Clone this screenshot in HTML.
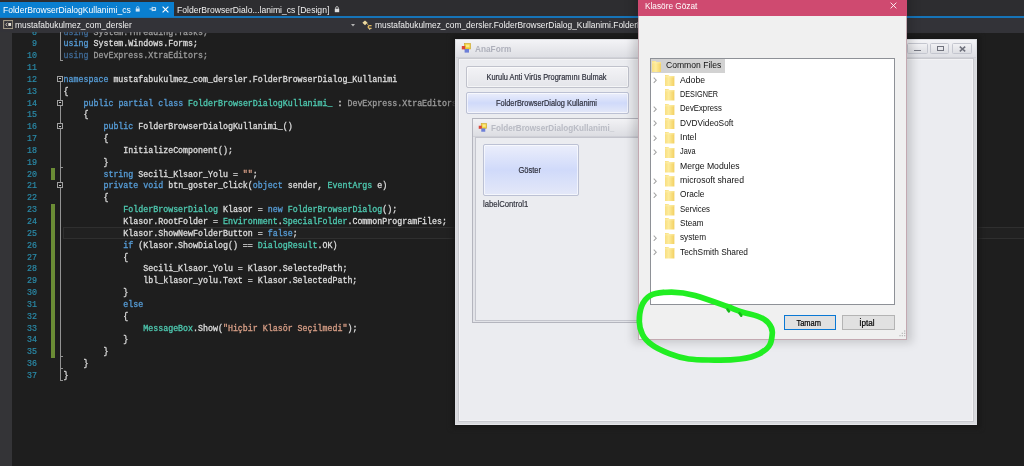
<!DOCTYPE html>
<html lang="tr">
<head>
<meta charset="utf-8">
<title>FolderBrowserDialog Kullanimi</title>
<style>
*{margin:0;padding:0;box-sizing:border-box}
html,body{width:1024px;height:466px;overflow:hidden;background:#1e1e1e}
body{position:relative;font-family:"Liberation Sans",sans-serif;filter:blur(.35px)}
.abs{position:absolute}
.ui{font-family:"Liberation Sans",sans-serif;white-space:nowrap;position:absolute}
/* ---------- IDE chrome ---------- */
#tabbar{left:0;top:0;width:1024px;height:16px;background:#2d2d30}
#tabline{left:0;top:16px;width:1024px;height:2.3px;background:#1674b8}
#tab1{left:0;top:2px;width:174px;height:15px;background:#0a7fd0}
#nav{left:0;top:18px;width:1024px;height:14.6px;background:#333338}
#margin{left:0;top:32px;width:12px;height:434px;background:#343437}
.tabtxt{top:3px;height:14px;line-height:14px;font-size:9px;color:#fff}
.navtxt{top:18.3px;height:14px;line-height:14px;font-size:9px;color:#f1f1f1}
/* ---------- code ---------- */
#code{left:0;top:32px;width:1024px;height:434px;overflow:hidden}
.ln,.cl{position:absolute;height:12px;line-height:12px;white-space:pre;font-family:"Liberation Mono",monospace;font-size:8.3px}
.ln{left:17px;width:20px;text-align:right;color:#2a8aa8}
.cl{left:63.6px;color:#dcdcdc;-webkit-text-stroke:.3px}
.ln{-webkit-text-stroke:.2px}
.k{color:#569cd6}.t{color:#4ec9b0}.s{color:#d69d85}.d{color:#9b9b9b}.dk{color:#3f6a95}
.gb{position:absolute;left:51px;width:4px;background:#6b8c35}
.vl{position:absolute;left:59.6px;width:1.3px;background:#939393}
.tk{position:absolute;left:60px;width:3px;height:1.2px;background:#939393}
.bx{position:absolute;left:56.6px;width:6px;height:6px;border:1px solid #a0a0a0;background:#1e1e1e}
.bx:after{content:"";position:absolute;left:1px;top:1.5px;width:2px;height:1px;background:#c8c8c8}
#curline{left:62.5px;top:194.7px;width:962px;height:12.4px;border:1px solid #2f2f2f;background:#212121}

/* ---------- AnaForm (DevExpress XtraForm) ---------- */
#shadowA{left:452px;top:36px;width:528px;height:392px;background:#171717;filter:blur(2.5px)}
#ana{left:455px;top:39px;width:521.5px;height:385.6px;background:#d9dade}
#anab{left:0;top:0;width:521.5px;height:385.6px;border:1px solid #dcdde1;border-bottom-color:#e6e6ea}
#anatitle{left:0;top:0;width:100%;height:18.5px;background:linear-gradient(#f4f4f7,#dedfe4);border-bottom:1px solid #d0d1d8}
#anaclient{left:2.6px;top:19px;width:516px;height:363.6px;background:#ebecf0;border:1px solid #c9cacf;box-shadow:inset 0 0 0 1px #f3f3f6}
.ftitle{font-weight:bold;color:#aeb0bb;font-size:8.6px;height:18px;line-height:18px;filter:blur(.5px)}
.dxbtn{position:absolute;border:1px solid #c0c2cc;border-radius:2px;background:linear-gradient(#f3f3f6,#e4e5ea);box-shadow:inset 0 0 0 1px rgba(255,255,255,.6)}
.dxhot{background:linear-gradient(#ebeefb,#d0dafa 50%,#e4e8f8);border-color:#bcc1d4}
.dxtxt{-webkit-text-stroke:.2px;color:#2f313d;font-size:8.5px;text-align:center}
.wbtn{position:absolute;top:4.2px;height:10.8px;border:1px solid #c4c6cf;border-radius:1.5px;background:linear-gradient(#f1f1f4,#dddee3)}
#child{left:16.7px;top:78.7px;width:300px;height:205.5px;background:#e2e3e8;border:1px solid #b4b5be;border-bottom-width:1.5px}
#childtitle{left:0;top:0;width:100%;height:18px;background:linear-gradient(#f2f2f5,#dcdde2);border-bottom:1px solid #cfd0d7}
#childclient{left:2.6px;top:18.5px;width:293px;height:183.5px;background:#ebecf0;border:1px solid #c4c5cd}

/* ---------- Klasöre Gözat dialog (Win10) ---------- */
#dshadow{left:633px;top:-8px;width:279px;height:351px;background:rgba(0,0,0,.15);filter:blur(4px)}
#dlg{left:638px;top:0;width:269px;height:339.5px;background:#f0f0f0;border:1px solid #c3a9b1;border-top:0}
#dtitle{left:-1px;top:0;width:269px;height:15.8px;background:#cf4a70}
#dtt{left:6.2px;top:-0.9px;height:14px;line-height:14px;font-size:8.4px;color:#fff}
#tree{left:11px;top:58px;width:245px;height:246.5px;background:#fff;border:1px solid #8e9197}
.row{position:absolute;left:0;height:14.35px;width:244px}
.row .fx{position:absolute;top:2.4px;width:9.4px;height:11.5px}
.row .tx{position:absolute;top:0;height:14.35px;line-height:14.35px;font-size:9px;color:#111;white-space:nowrap;font-family:"Liberation Sans",sans-serif}
.row .ch{position:absolute;left:2.4px;top:4.6px;width:4px;height:6.4px}
.wb{position:absolute;top:315px;height:15px;background:#e1e1e1;border:1px solid #adadad;font-size:8.4px;line-height:14.6px;text-align:center;color:#000;-webkit-text-stroke:.2px;border-color:#b4b4b4}
#tt1{transform:scaleX(0.9497);transform-origin:left}
#tt2{transform:scaleX(0.9545);transform-origin:left}
#nt1{transform:scaleX(0.9339);transform-origin:left}
#nt2{transform:scaleX(0.9339);transform-origin:left}
#anat{transform:scaleX(0.9620);transform-origin:left}
#b1{transform:scaleX(0.8708);transform-origin:center}
#b2{transform:scaleX(0.8691);transform-origin:center}
#cht{transform:scaleX(0.9450);transform-origin:left}
#gos{transform:scaleX(0.8857);transform-origin:center}
#lbl{transform:scaleX(0.9043);transform-origin:left}
#dtt{transform:scaleX(0.9853);transform-origin:left}
#tr0{transform:scaleX(0.9532);transform-origin:left}
#tr1{transform:scaleX(0.9642);transform-origin:left}
#tr2{transform:scaleX(0.8082);transform-origin:left}
#tr3{transform:scaleX(0.8616);transform-origin:left}
#tr4{transform:scaleX(0.9227);transform-origin:left}
#tr5{transform:scaleX(0.9579);transform-origin:left}
#tr6{transform:scaleX(0.8151);transform-origin:left}
#tr7{transform:scaleX(0.9608);transform-origin:left}
#tr8{transform:scaleX(0.9620);transform-origin:left}
#tr9{transform:scaleX(0.9240);transform-origin:left}
#tr10{transform:scaleX(0.8692);transform-origin:left}
#tr11{transform:scaleX(0.9033);transform-origin:left}
#tr12{transform:scaleX(0.9118);transform-origin:left}
#tr13{transform:scaleX(0.9246);transform-origin:left}
#ok{transform:scaleX(0.8956);transform-origin:center}
#cancel{transform:scaleX(0.9720);transform-origin:center}
</style>
</head>
<body>
<!-- ================= IDE ================= -->
<div class="abs" id="tabbar"></div>
<div class="abs" id="tabline"></div>
<div class="abs" id="tab1"></div>
<div class="ui tabtxt" id="tt1" style="left:3px">FolderBrowserDialogKullanimi_cs</div>
<div class="ui tabtxt" id="tt2" style="left:177.3px;top:2.6px;color:#f1f1f1">FolderBrowserDialo...lanimi_cs [Design]</div>
<div class="abs" id="nav"></div>
<div class="ui navtxt" id="nt1" style="left:15px">mustafabukulmez_com_dersler</div>
<div class="ui navtxt" id="nt2" style="left:374.8px">mustafabukulmez_com_dersler.FolderBrowserDialog_Kullanimi.FolderBrowserDialogKullanimi_</div>


<!-- tab icons -->
<svg class="abs" style="left:135.3px;top:6.2px" width="5.4" height="6.3" viewBox="0 0 6 7"><path d="M1.7 3V1.9a1.3 1.3 0 0 1 2.6 0V3" fill="none" stroke="#bcdcf4" stroke-width=".9"/><rect x=".8" y="2.8" width="4.4" height="3.4" fill="#cfe6f8"/></svg>
<svg class="abs" style="left:148.8px;top:5.9px" width="8" height="6" viewBox="0 0 8 6"><path d="M.5 3H3.2" stroke="#e4f0fa" stroke-width=".9"/><path d="M3.2.8V5.2M3.4 1.6H6.6V4.3H3.4" fill="none" stroke="#e4f0fa" stroke-width=".9"/><path d="M3.4 3.6H6.6V4.6H3.4z" fill="#e4f0fa"/></svg>
<svg class="abs" style="left:162.4px;top:5.7px" width="7" height="7" viewBox="0 0 7 7"><path d="M.6.6 6.4 6.4M6.4.6.6 6.4" stroke="#fff" stroke-width="1.15" fill="none"/></svg>
<svg class="abs" style="left:334px;top:5.5px" width="6" height="7" viewBox="0 0 6 7"><path d="M1.7 3V1.9a1.3 1.3 0 0 1 2.6 0V3" fill="none" stroke="#c8c8c8" stroke-width=".9"/><rect x=".8" y="2.8" width="4.4" height="3.4" fill="#dedede"/></svg>
<!-- nav icons -->
<svg class="abs" style="left:2.6px;top:19.7px" width="10.4" height="9.3" viewBox="0 0 11 10"><rect x=".6" y=".6" width="9.8" height="8.6" fill="none" stroke="#a8a08c" stroke-width="1.1"/><path d="M4.6 3.2 2.8 4.9 4.6 6.6" fill="none" stroke="#d8d2c4" stroke-width="1"/><rect x="5.6" y="3.2" width="3" height="3.2" fill="#e6e2d8"/></svg>
<svg class="abs" style="left:350.6px;top:24.2px" width="4" height="2.4" viewBox="0 0 5 3"><path d="M0 0H5L2.5 3z" fill="#b4b4b4"/></svg>
<svg class="abs" style="left:362.4px;top:19.7px" width="11" height="10.5" viewBox="0 0 11 10.5"><path d="M3 .4 5.6 2.7 3 5.2.4 2.7z" fill="#ecd9a0"/><path d="M4.6 3.3 6.4 5" stroke="#d9b868" stroke-width="1"/><path d="M9.6 5.6H7.6Q6.2 5.6 6.2 7T7.6 8.4H9.6" fill="none" stroke="#e0b860" stroke-width="1.4"/><path d="M8.6 8.8 7.7 10.1 6.9 8.8z" fill="#e8e0c8"/></svg>

<div class="abs" id="code">
<div class="abs" id="curline"></div>
<div class="abs" id="margin" style="top:0"></div>
<div class="ln" style="top:-5.44px">8</div><div class="cl" style="top:-5.44px"><span class="dk">using</span><span class="d"> System.Threading.Tasks;</span></div>
<div class="ln" style="top:6.40px">9</div><div class="cl" style="top:6.40px"><span class="k">using</span> System.Windows.Forms;</div>
<div class="ln" style="top:18.24px">10</div><div class="cl" style="top:18.24px"><span class="dk">using</span><span class="d"> DevExpress.XtraEditors;</span></div>
<div class="ln" style="top:30.08px">11</div><div class="cl" style="top:30.08px"></div>
<div class="ln" style="top:41.92px">12</div><div class="cl" style="top:41.92px"><span class="k">namespace</span> mustafabukulmez_com_dersler.FolderBrowserDialog_Kullanimi</div>
<div class="ln" style="top:53.76px">13</div><div class="cl" style="top:53.76px">{</div>
<div class="ln" style="top:65.60px">14</div><div class="cl" style="top:65.60px">    <span class="k">public</span> <span class="k">partial</span> <span class="k">class</span> <span class="t">FolderBrowserDialogKullanimi_</span> : <span class="d">DevExpress.XtraEditors.</span><span class="t">XtraForm</span></div>
<div class="ln" style="top:77.44px">15</div><div class="cl" style="top:77.44px">    {</div>
<div class="ln" style="top:89.28px">16</div><div class="cl" style="top:89.28px">        <span class="k">public</span> FolderBrowserDialogKullanimi_()</div>
<div class="ln" style="top:101.12px">17</div><div class="cl" style="top:101.12px">        {</div>
<div class="ln" style="top:112.96px">18</div><div class="cl" style="top:112.96px">            InitializeComponent();</div>
<div class="ln" style="top:124.80px">19</div><div class="cl" style="top:124.80px">        }</div>
<div class="ln" style="top:136.64px">20</div><div class="cl" style="top:136.64px">        <span class="k">string</span> Secili_Klsaor_Yolu = <span class="s">""</span>;</div>
<div class="ln" style="top:148.48px">21</div><div class="cl" style="top:148.48px">        <span class="k">private</span> <span class="k">void</span> btn_goster_Click(<span class="k">object</span> sender, <span class="t">EventArgs</span> e)</div>
<div class="ln" style="top:160.32px">22</div><div class="cl" style="top:160.32px">        {</div>
<div class="ln" style="top:172.16px">23</div><div class="cl" style="top:172.16px">            <span class="t">FolderBrowserDialog</span> Klasor = <span class="k">new</span> <span class="t">FolderBrowserDialog</span>();</div>
<div class="ln" style="top:184.00px">24</div><div class="cl" style="top:184.00px">            Klasor.RootFolder = <span class="t">Environment</span>.<span class="t">SpecialFolder</span>.CommonProgramFiles;</div>
<div class="ln" style="top:195.84px">25</div><div class="cl" style="top:195.84px">            Klasor.ShowNewFolderButton = <span class="k">false</span>;</div>
<div class="ln" style="top:207.68px">26</div><div class="cl" style="top:207.68px">            <span class="k">if</span> (Klasor.ShowDialog() == <span class="t">DialogResult</span>.OK)</div>
<div class="ln" style="top:219.52px">27</div><div class="cl" style="top:219.52px">            {</div>
<div class="ln" style="top:231.36px">28</div><div class="cl" style="top:231.36px">                Secili_Klsaor_Yolu = Klasor.SelectedPath;</div>
<div class="ln" style="top:243.20px">29</div><div class="cl" style="top:243.20px">                lbl_klasor_yolu.Text = Klasor.SelectedPath;</div>
<div class="ln" style="top:255.04px">30</div><div class="cl" style="top:255.04px">            }</div>
<div class="ln" style="top:266.88px">31</div><div class="cl" style="top:266.88px">            <span class="k">else</span></div>
<div class="ln" style="top:278.72px">32</div><div class="cl" style="top:278.72px">            {</div>
<div class="ln" style="top:290.56px">33</div><div class="cl" style="top:290.56px">                <span class="t">MessageBox</span>.Show(<span class="s">"Hiçbir Klasör Seçilmedi"</span>);</div>
<div class="ln" style="top:302.40px">34</div><div class="cl" style="top:302.40px">            }</div>
<div class="ln" style="top:314.24px">35</div><div class="cl" style="top:314.24px">        }</div>
<div class="ln" style="top:326.08px">36</div><div class="cl" style="top:326.08px">    }</div>
<div class="ln" style="top:337.92px">37</div><div class="cl" style="top:337.92px">}</div>
<div class="gb" style="top:136.02px;height:12.44px"></div>
<div class="gb" style="top:171.54px;height:154.72px"></div>
<div class="vl" style="top:0;height:29.16px"></div>
<div class="tk" style="top:28.16px"></div>
<div class="vl" style="top:46.92px;height:301.92px"></div>
<div class="tk" style="top:134.72px"></div>
<div class="tk" style="top:324.16px"></div>
<div class="tk" style="top:336.00px"></div>
<div class="tk" style="top:347.84px"></div>
<div class="bx" style="top:43.92px"></div>
<div class="bx" style="top:67.60px"></div>
<div class="bx" style="top:91.28px"></div>
<div class="bx" style="top:150.48px"></div>
</div>


<!-- ================= AnaForm ================= -->
<div class="abs" id="shadowA"></div>
<div class="abs" id="ana">
  <div class="abs" id="anatitle"></div><div class="abs" id="anab"></div>
  <svg class="abs" style="left:6px;top:3.5px" width="11" height="11" viewBox="0 0 11 11"><rect x="3.5" y="0.5" width="6" height="5.5" fill="#f2d23c" stroke="#c9a227" stroke-width=".6"/><rect x="0.8" y="3" width="3.4" height="3.4" fill="#d8453a"/><rect x="3.6" y="6" width="4.4" height="3.6" fill="#6d7fd8"/><rect x="5" y="1.6" width="3.4" height="2.6" fill="#fbe98a"/></svg>
  <div class="ui ftitle" id="anat" style="left:20px;top:0.5px">AnaForm</div>
  <div class="wbtn" style="left:452px;width:20.5px"><i class="abs" style="left:6px;top:5.5px;width:7px;height:1.6px;background:#777984"></i></div>
  <div class="wbtn" style="left:475px;width:19px"><i class="abs" style="left:6px;top:2px;width:6.5px;height:5px;border:1.5px solid #6f717c"></i></div>
  <div class="wbtn" style="left:497px;width:19.5px"><svg class="abs" style="left:5.5px;top:1.5px" width="7" height="6" viewBox="0 0 7 6"><path d="M.8.6 6.2 5.4M6.2.6.8 5.4" stroke="#6f717c" stroke-width="1.5" fill="none"/></svg></div>
  <div class="abs" id="anaclient"></div>
  <div class="dxbtn" style="left:11px;top:26.5px;width:163px;height:22px"></div>
  <div class="ui dxtxt" id="b1" style="left:9.6px;top:26.5px;width:163px;height:22px;line-height:22px">Kurulu Anti Virüs Programını Bulmak</div>
  <div class="dxbtn dxhot" style="left:11px;top:52.5px;width:163px;height:22px"></div>
  <div class="ui dxtxt" id="b2" style="left:9.9px;top:52.5px;width:163px;height:22px;line-height:22px">FolderBrowserDialog Kullanimi</div>
  <div class="abs" id="child">
    <div class="abs" id="childtitle"></div>
    <svg class="abs" style="left:5.5px;top:4px" width="10" height="10" viewBox="0 0 11 11"><rect x="3.5" y="0.5" width="6" height="5.5" fill="#f2d23c" stroke="#c9a227" stroke-width=".6"/><rect x="0.8" y="3" width="3.4" height="3.4" fill="#d8453a"/><rect x="3.6" y="6" width="4.4" height="3.6" fill="#6d7fd8"/><rect x="5" y="1.6" width="3.4" height="2.6" fill="#fbe98a"/></svg>
    <div class="ui ftitle" id="cht" style="left:18.5px;top:0;color:#b9bbc4">FolderBrowserDialogKullanimi_</div>
    <div class="abs" id="childclient"></div>
    <div class="dxbtn dxhot" style="left:10.5px;top:25.5px;width:95.5px;height:51.5px"></div>
    <div class="ui dxtxt" id="gos" style="left:9.5px;top:25.5px;width:95.5px;height:51.5px;line-height:53.6px">Göster</div>
    <div class="ui dxtxt" id="lbl" style="left:10px;top:79px;height:12px;line-height:12px;text-align:left;color:#33353f">labelControl1</div>
  </div>
</div>


<!-- ================= Klasöre Gözat ================= -->
<svg width="0" height="0" style="position:absolute"><defs><linearGradient id="fg" x1="0" y1="0" x2="1" y2="0"><stop offset="0" stop-color="#f9df82"/><stop offset=".4" stop-color="#fdec9c"/><stop offset="1" stop-color="#f3d061"/></linearGradient></defs></svg>
<div class="abs" id="dshadow"></div>
<div class="abs" id="dlg">
  <div class="abs" id="dtitle"></div>
  <div class="ui" id="dtt">Klasöre Gözat</div>
  <svg class="abs" style="left:251.2px;top:2.2px" width="7" height="7" viewBox="0 0 8 8"><path d="M.7.7 7.3 7.3M7.3.7.7 7.3" stroke="#fff" stroke-width="1" fill="none"/></svg>
  <div class="abs" id="tree">
<div class="row" style="top:-0.80px"><i class="abs" style="left:0;top:0.6px;width:73.5px;height:14px;background:#d2d2d2"></i><svg class="fx" style="left:0.5px" viewBox="0 0 10 12" preserveAspectRatio="none"><path d="M0 0H3.8l.9 1H10V12H0z" fill="url(#fg)"/><path d="M0 1.9H10" stroke="#fdf2b8" stroke-width=".7"/></svg><span class="tx" id="tr0" style="left:14.5px">Common Files</span></div>
<div class="row" style="top:13.55px"><svg class="ch" viewBox="0 0 4 7"><path d="M.6.6 3.4 3.5.6 6.4" stroke="#a4a4a4" stroke-width="1.1" fill="none"/></svg><svg class="fx" style="left:14.4px" viewBox="0 0 10 12" preserveAspectRatio="none"><path d="M0 0H3.8l.9 1H10V12H0z" fill="url(#fg)"/><path d="M0 1.9H10" stroke="#fdf2b8" stroke-width=".7"/></svg><span class="tx" id="tr1" style="left:28.5px">Adobe</span></div>
<div class="row" style="top:27.90px"><svg class="fx" style="left:14.4px" viewBox="0 0 10 12" preserveAspectRatio="none"><path d="M0 0H3.8l.9 1H10V12H0z" fill="url(#fg)"/><path d="M0 1.9H10" stroke="#fdf2b8" stroke-width=".7"/></svg><span class="tx" id="tr2" style="left:28.5px">DESIGNER</span></div>
<div class="row" style="top:42.25px"><svg class="ch" viewBox="0 0 4 7"><path d="M.6.6 3.4 3.5.6 6.4" stroke="#a4a4a4" stroke-width="1.1" fill="none"/></svg><svg class="fx" style="left:14.4px" viewBox="0 0 10 12" preserveAspectRatio="none"><path d="M0 0H3.8l.9 1H10V12H0z" fill="url(#fg)"/><path d="M0 1.9H10" stroke="#fdf2b8" stroke-width=".7"/></svg><span class="tx" id="tr3" style="left:28.5px">DevExpress</span></div>
<div class="row" style="top:56.60px"><svg class="ch" viewBox="0 0 4 7"><path d="M.6.6 3.4 3.5.6 6.4" stroke="#a4a4a4" stroke-width="1.1" fill="none"/></svg><svg class="fx" style="left:14.4px" viewBox="0 0 10 12" preserveAspectRatio="none"><path d="M0 0H3.8l.9 1H10V12H0z" fill="url(#fg)"/><path d="M0 1.9H10" stroke="#fdf2b8" stroke-width=".7"/></svg><span class="tx" id="tr4" style="left:28.5px">DVDVideoSoft</span></div>
<div class="row" style="top:70.95px"><svg class="ch" viewBox="0 0 4 7"><path d="M.6.6 3.4 3.5.6 6.4" stroke="#a4a4a4" stroke-width="1.1" fill="none"/></svg><svg class="fx" style="left:14.4px" viewBox="0 0 10 12" preserveAspectRatio="none"><path d="M0 0H3.8l.9 1H10V12H0z" fill="url(#fg)"/><path d="M0 1.9H10" stroke="#fdf2b8" stroke-width=".7"/></svg><span class="tx" id="tr5" style="left:28.5px">Intel</span></div>
<div class="row" style="top:85.30px"><svg class="ch" viewBox="0 0 4 7"><path d="M.6.6 3.4 3.5.6 6.4" stroke="#a4a4a4" stroke-width="1.1" fill="none"/></svg><svg class="fx" style="left:14.4px" viewBox="0 0 10 12" preserveAspectRatio="none"><path d="M0 0H3.8l.9 1H10V12H0z" fill="url(#fg)"/><path d="M0 1.9H10" stroke="#fdf2b8" stroke-width=".7"/></svg><span class="tx" id="tr6" style="left:28.5px">Java</span></div>
<div class="row" style="top:99.65px"><svg class="fx" style="left:14.4px" viewBox="0 0 10 12" preserveAspectRatio="none"><path d="M0 0H3.8l.9 1H10V12H0z" fill="url(#fg)"/><path d="M0 1.9H10" stroke="#fdf2b8" stroke-width=".7"/></svg><span class="tx" id="tr7" style="left:28.5px">Merge Modules</span></div>
<div class="row" style="top:114.00px"><svg class="ch" viewBox="0 0 4 7"><path d="M.6.6 3.4 3.5.6 6.4" stroke="#a4a4a4" stroke-width="1.1" fill="none"/></svg><svg class="fx" style="left:14.4px" viewBox="0 0 10 12" preserveAspectRatio="none"><path d="M0 0H3.8l.9 1H10V12H0z" fill="url(#fg)"/><path d="M0 1.9H10" stroke="#fdf2b8" stroke-width=".7"/></svg><span class="tx" id="tr8" style="left:28.5px">microsoft shared</span></div>
<div class="row" style="top:128.35px"><svg class="ch" viewBox="0 0 4 7"><path d="M.6.6 3.4 3.5.6 6.4" stroke="#a4a4a4" stroke-width="1.1" fill="none"/></svg><svg class="fx" style="left:14.4px" viewBox="0 0 10 12" preserveAspectRatio="none"><path d="M0 0H3.8l.9 1H10V12H0z" fill="url(#fg)"/><path d="M0 1.9H10" stroke="#fdf2b8" stroke-width=".7"/></svg><span class="tx" id="tr9" style="left:28.5px">Oracle</span></div>
<div class="row" style="top:142.70px"><svg class="fx" style="left:14.4px" viewBox="0 0 10 12" preserveAspectRatio="none"><path d="M0 0H3.8l.9 1H10V12H0z" fill="url(#fg)"/><path d="M0 1.9H10" stroke="#fdf2b8" stroke-width=".7"/></svg><span class="tx" id="tr10" style="left:28.5px">Services</span></div>
<div class="row" style="top:157.05px"><svg class="fx" style="left:14.4px" viewBox="0 0 10 12" preserveAspectRatio="none"><path d="M0 0H3.8l.9 1H10V12H0z" fill="url(#fg)"/><path d="M0 1.9H10" stroke="#fdf2b8" stroke-width=".7"/></svg><span class="tx" id="tr11" style="left:28.5px">Steam</span></div>
<div class="row" style="top:171.40px"><svg class="ch" viewBox="0 0 4 7"><path d="M.6.6 3.4 3.5.6 6.4" stroke="#a4a4a4" stroke-width="1.1" fill="none"/></svg><svg class="fx" style="left:14.4px" viewBox="0 0 10 12" preserveAspectRatio="none"><path d="M0 0H3.8l.9 1H10V12H0z" fill="url(#fg)"/><path d="M0 1.9H10" stroke="#fdf2b8" stroke-width=".7"/></svg><span class="tx" id="tr12" style="left:28.5px">system</span></div>
<div class="row" style="top:185.75px"><svg class="ch" viewBox="0 0 4 7"><path d="M.6.6 3.4 3.5.6 6.4" stroke="#a4a4a4" stroke-width="1.1" fill="none"/></svg><svg class="fx" style="left:14.4px" viewBox="0 0 10 12" preserveAspectRatio="none"><path d="M0 0H3.8l.9 1H10V12H0z" fill="url(#fg)"/><path d="M0 1.9H10" stroke="#fdf2b8" stroke-width=".7"/></svg><span class="tx" id="tr13" style="left:28.5px">TechSmith Shared</span></div>
  </div>
  <div class="wb" style="left:145px;width:52px;border:1.5px solid #0a78d4;line-height:14.2px"><span id="ok" style="display:inline-block;position:relative;left:-1.6px">Tamam</span></div>
  <div class="wb" style="left:203.3px;width:52.4px"><span id="cancel" style="display:inline-block;position:relative;left:-1.7px">İptal</span></div>
  <svg class="abs" style="left:259px;top:329px" width="8" height="8" viewBox="0 0 8 8"><g fill="#bcbcbc"><rect x="6" y="6" width="1.3" height="1.3"/><rect x="3.7" y="6" width="1.3" height="1.3"/><rect x="6" y="3.7" width="1.3" height="1.3"/><rect x="1.4" y="6" width="1.3" height="1.3"/><rect x="3.7" y="3.7" width="1.3" height="1.3"/><rect x="6" y="1.4" width="1.3" height="1.3"/></g></svg>
</div>
<!-- green hand-drawn marker -->
<svg class="abs" style="left:620px;top:270px" width="180" height="110" viewBox="620 270 180 110"><path d="M662.9 292.5C672 291.5 684.4 292.4 695 295.5C706 298.8 716 302.5 727.3 306.5C733 308.5 737 310.5 742 312C748 313.8 752.5 314.5 757.3 316.1C763 318 766 320 768.5 323C771 326 772.6 329 772.3 333C772 337.5 771.8 340.5 770.2 344C768.5 348 764.5 351 759.5 353.7C754 356.6 748 358 740.1 359C731 360.2 722.5 360.3 714.4 360.1C705.5 359.9 696.5 360 688.7 359C681.5 358 675 356 669.3 353.7C662.5 351 656.5 348.5 652.2 345.1C647.5 341.5 644.5 338.5 642.5 334.4C640.3 330 639.3 326 639.3 321.5C639.3 316 640 310.5 641.5 306.5C643.2 302 646 298 650 295.7C654 293.5 658 292.8 663.5 292.4" fill="none" stroke="#21ee22" stroke-width="5.7" stroke-linecap="round" stroke-linejoin="round"/><path d="M727.5 309.5l1.5 1.8M739.5 313.2l1.8 2.4" stroke="#14b818" stroke-width="2.6" stroke-linecap="round"/></svg>

</body>
</html>
